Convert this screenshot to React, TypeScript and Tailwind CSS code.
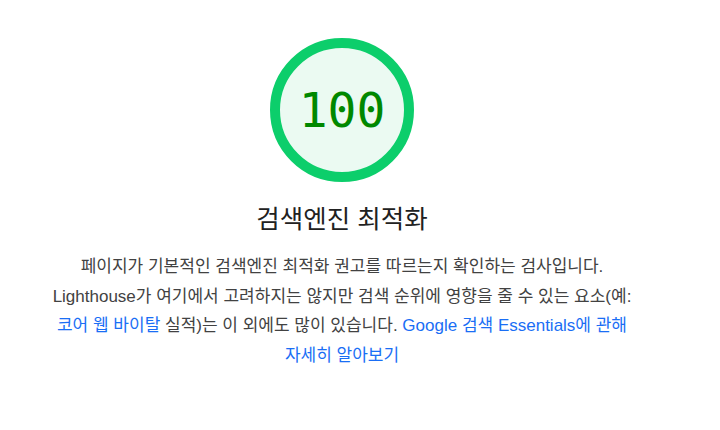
export default function App() {
  return (
    <div
      className="w-[684px] h-[430px] bg-white flex flex-col items-center pt-[38px]"
      style={{ fontFamily: '"Liberation Sans", "Noto Sans CJK KR", sans-serif' }}
    >
      {/* Gauge */}
      <div className="relative w-[144px] h-[144px]">
        <svg viewBox="0 0 144 144" className="absolute inset-0 w-full h-full">
          <circle cx="72" cy="72" r="67" fill="#ebfaf2" stroke="#0cce6b" strokeWidth="10" />
        </svg>
        <div
          className="absolute inset-0 flex items-center justify-center text-[48px] text-[#008800] leading-none"
          style={{ fontFamily: '"DejaVu Sans Mono", monospace' }}
        >
          100
        </div>
      </div>

      <h2 className="mt-[21px] text-[25.5px] leading-[32px] text-[#212121]">검색엔진 최적화</h2>

      <p className="mt-[17px] w-[614px] text-center text-[17px] leading-[29.5px] text-[#424242] break-keep">
        페이지가 기본적인 검색엔진 최적화 권고를 따르는지 확인하는 검사입니다. Lighthouse가 여기에서 고려하지는 않지만 검색 순위에 영향을 줄 수 있는 요소(예:{" "}
        <a className="text-[#1a6ef5]">코어 웹 바이탈</a> 실적)는 이 외에도 많이 있습니다.{" "}
        <a className="text-[#1a6ef5]">Google 검색 Essentials에 관해 자세히 알아보기</a>
      </p>
    </div>
  );
}
